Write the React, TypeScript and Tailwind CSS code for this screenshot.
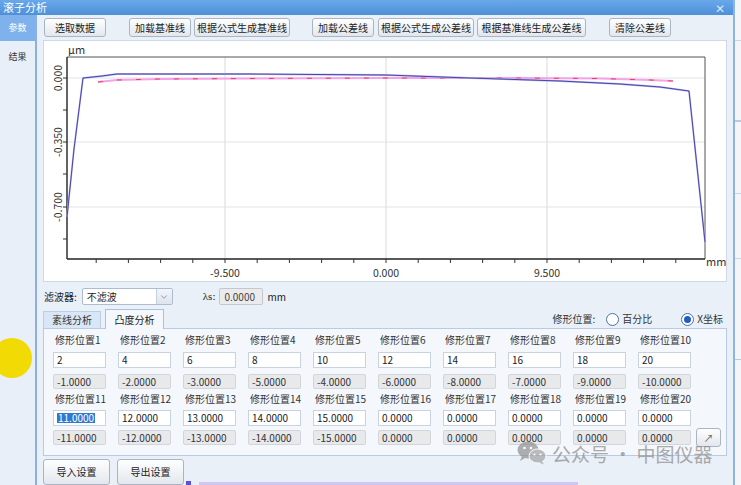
import React from "react";
import { ChevronDown } from "lucide-react";

const row1In = ["2", "4", "6", "8", "10", "12", "14", "16", "18", "20"];
const row1Out = ["-1.0000", "-2.0000", "-3.0000", "-5.0000", "-4.0000", "-6.0000", "-8.0000", "-7.0000", "-9.0000", "-10.0000"];
const row2In = ["11.0000", "12.0000", "13.0000", "14.0000", "15.0000", "0.0000", "0.0000", "0.0000", "0.0000", "0.0000"];
const row2Out = ["-11.0000", "-12.0000", "-13.0000", "-14.0000", "-15.0000", "0.0000", "0.0000", "0.0000", "0.0000", "0.0000"];

function Btn({ className, children }: { className: string; children: React.ReactNode }) {
  return (
    <button
      className={`flex items-center justify-center rounded-[3px] border border-[#aab4c2] bg-gradient-to-b from-[#fefefe] to-[#e3e7ed] text-[10px] leading-none text-[#222] ${className}`}
    >
      {children}
    </button>
  );
}

function Chart() {
  const xTicks: number[] = [];
  for (let k = -4; k <= 14; k++) xTicks.push(225 + k * 32.2);
  const yTicks = [79, 111, 143, 175, 208, 240];
  const blue = "67,218 74,150 83,79 102,77 117,75 250,75 386,76 470,79 560,82 620,85 660,88 689,92 705,243";
  const pink = "98,83 117,81 160,80 250,79.5 386,79 520,79 600,79.5 650,81 673,82";
  return (
    <svg width="682" height="240" viewBox="44 42 682 240" className="block">
      {/* grid */}
      {[225, 386, 547].map((x) => (
        <line key={x} x1={x} y1={58} x2={x} y2={260} stroke="#d9d9d9" strokeWidth="1" />
      ))}
      {[79, 143, 208].map((y) => (
        <line key={y} x1={67} y1={y} x2={705} y2={y} stroke="#e2e2e2" strokeWidth="1" />
      ))}
      {/* frame */}
      <line x1={67} y1={58} x2={705} y2={58} stroke="#555" strokeWidth="1" />
      <line x1={705} y1={58} x2={705} y2={260} stroke="#555" strokeWidth="1" />
      <line x1={67} y1={58} x2={67} y2={260} stroke="#222" strokeWidth="1.4" />
      <line x1={67} y1={260} x2={705} y2={260} stroke="#222" strokeWidth="1.4" />
      {xTicks.map((x) => (
        <line key={x} x1={x} y1={260} x2={x} y2={264} stroke="#333" strokeWidth="1" />
      ))}
      {yTicks.map((y) => (
        <line key={y} x1={63} y1={y} x2={67} y2={y} stroke="#333" strokeWidth="1" />
      ))}
      {/* curves */}
      <polyline points={pink} fill="none" stroke="#f4a3ea" strokeWidth="2" />
      <polyline points={pink} fill="none" stroke="#e8405e" strokeWidth="1" strokeDasharray="5 14" />
      <polyline points={blue} fill="none" stroke="#b9b6f5" strokeWidth="1.8" />
      <polyline points={blue} fill="none" stroke="#2b2a8e" strokeWidth="0.8" />
      {/* labels */}
      <g fill="#333" fontSize="10.5" fontFamily="'Noto Sans CJK SC','Liberation Sans',sans-serif">
        <text x={68} y={55} fontSize="11">μm</text>
        <text x={706} y={267} fontSize="11">mm</text>
        <text x={225} y={278} textAnchor="middle">-9.500</text>
        <text x={386} y={278} textAnchor="middle">0.000</text>
        <text x={547} y={278} textAnchor="middle">9.500</text>
        <text x={62} y={79} textAnchor="middle" transform="rotate(-90 62 79)">0.000</text>
        <text x={62} y={143} textAnchor="middle" transform="rotate(-90 62 143)">-0.350</text>
        <text x={62} y={208} textAnchor="middle" transform="rotate(-90 62 208)">-0.700</text>
      </g>
    </svg>
  );
}

function InBox({ v, sel }: { v: string; sel?: boolean }) {
  return (
    <div className="flex h-[16px] w-[53px] items-center border border-[#c9d3df] bg-white pl-[3px] text-[10px] leading-none text-[#222]">
      {sel ? <span className="bg-[#2f78d4] px-[1px] text-white">{v}</span> : v}
    </div>
  );
}

function OutBox({ v }: { v: string }) {
  return (
    <div className="flex h-[15px] w-[53px] items-center rounded-[2px] border border-[#d2d6db] bg-[#e8e9eb] pl-[3px] text-[10px] leading-none text-[#333]">
      {v}
    </div>
  );
}

function Radio({ on, label }: { on?: boolean; label: string }) {
  return (
    <div className="flex items-center gap-[3px]">
      <div className="flex h-[13px] w-[13px] items-center justify-center rounded-full border border-[#4d6fa3] bg-white">
        {on && <div className="h-[7px] w-[7px] rounded-full bg-[#1e5fc4]" />}
      </div>
      <span className="text-[10px] leading-none text-[#333]">{label}</span>
    </div>
  );
}

function WeChat() {
  return (
    <svg width="30" height="24" viewBox="0 0 30 24">
      <ellipse cx="11" cy="9" rx="10.5" ry="8.5" fill="#8f8f8f" />
      <path d="M5 15 L3 20 L9 16.5 Z" fill="#8f8f8f" />
      <ellipse cx="20.5" cy="15" rx="8.5" ry="7" fill="#a3a3a3" stroke="#fff" strokeWidth="1" />
      <path d="M25 20 L27 23.5 L22 21.5 Z" fill="#a3a3a3" />
      <circle cx="7.5" cy="7" r="1.3" fill="#fff" />
      <circle cx="14" cy="7" r="1.3" fill="#fff" />
      <circle cx="17.5" cy="13.5" r="1.1" fill="#fff" />
      <circle cx="23.5" cy="13.5" r="1.1" fill="#fff" />
    </svg>
  );
}

export default function App() {
  return (
    <div className="relative flex h-[485px] w-[741px] overflow-hidden bg-[#eef2f7] font-['Noto_Sans_CJK_SC','Liberation_Sans',sans-serif]">
      {/* window */}
      <div className="flex w-[735px] flex-col border-r-2 border-[#8fb4e2]">
        <div className="flex h-[16px] items-center justify-between bg-gradient-to-b from-[#69a8ea] to-[#4e8fd8] pl-[3px] pr-[8px]">
          <span className="text-[11px] leading-none text-white">滚子分析</span>
          <span className="text-[12px] leading-none text-[#d7e6f8]">✕</span>
        </div>
        <div className="flex flex-1">
          {/* sidebar */}
          <div className="flex w-[37px] flex-col border-r-2 border-[#8cb1e0] bg-[#e9eff8]">
            <div className="flex h-[26px] items-center justify-center bg-[#7fb2ec] text-[9px] text-white">参数</div>
            <div className="mt-[9px] text-center text-[9px] text-[#333]">结果</div>
          </div>
          {/* content */}
          <div className="flex flex-1 flex-col bg-[#eaf0f8] px-[6px]">
            <div className="mt-[3px] flex">
              <Btn className="ml-[1px] h-[19px] w-[62px]">选取数据</Btn>
              <Btn className="ml-[23px] h-[19px] w-[62px]">加载基准线</Btn>
              <Btn className="ml-[3px] h-[19px] w-[96px]">根据公式生成基准线</Btn>
              <Btn className="ml-[22px] h-[19px] w-[62px]">加载公差线</Btn>
              <Btn className="ml-[4px] h-[19px] w-[96px]">根据公式生成公差线</Btn>
              <Btn className="ml-[3px] h-[19px] w-[109px]">根据基准线生成公差线</Btn>
              <Btn className="ml-[23px] h-[19px] w-[62px]">清除公差线</Btn>
            </div>
            <div className="mt-[3px] h-[242px] w-[684px] border border-[#cdd9ea] bg-white">
              <Chart />
            </div>
            {/* filter row */}
            <div className="mt-[6px] flex h-[17px] items-center text-[10px] text-[#222]">
              <span className="ml-[1px]">滤波器:</span>
              <div className="ml-[5px] flex h-[17px] w-[91px] items-center justify-between rounded-[2px] border border-[#aebccf] bg-white pl-[4px]">
                <span className="leading-none">不滤波</span>
                <div className="flex h-full w-[16px] items-center justify-center border-l border-[#c5d0de] bg-gradient-to-b from-[#f3f6fa] to-[#dde4ee]">
                  <ChevronDown size={10} className="text-[#7d8a9c]" />
                </div>
              </div>
              <span className="ml-[30px] font-['Liberation_Serif',serif] text-[11px]">λs:</span>
              <div className="ml-[4px] flex h-[17px] w-[44px] items-center rounded-[2px] border border-[#c4c8ce] bg-[#ebebeb] pl-[4px] leading-none text-[#444]">
                0.0000
              </div>
              <span className="ml-[4px]">mm</span>
            </div>
            {/* tabs + radio */}
            <div className="mt-[5px] flex h-[18px] items-end">
              <div className="flex h-[17px] w-[58px] items-center justify-center border border-b-0 border-[#bccde4] bg-[#d9e6f6] text-[10px] leading-none text-[#333]">
                素线分析
              </div>
              <div className="relative z-10 -mb-[1px] ml-[4px] flex h-[20px] w-[59px] items-center justify-center border border-b-0 border-[#a9c0df] bg-[#f4f7fc] text-[10px] leading-none text-[#222]">
                凸度分析
              </div>
              <div className="ml-auto mr-[4px] flex h-[18px] items-center self-start">
                <span className="mr-[11px] text-[10px] leading-none text-[#333]">修形位置:</span>
                <Radio label="百分比" />
                <div className="ml-[29px]">
                  <Radio on label="X坐标" />
                </div>
              </div>
            </div>
            {/* panel */}
            <div className="h-[128px] w-[684px] border border-[#b9cbe4] bg-[#f4f7fc] pl-[9px] pt-[4px]">
              <div className="flex">
                {row1In.map((_, i) => (
                  <div key={i} className="w-[65px] pl-[2px] text-[10px] leading-[14px] text-[#333]">修形位置{i + 1}</div>
                ))}
              </div>
              <div className="mt-[5px] flex">
                {row1In.map((v, i) => (
                  <div key={i} className="w-[65px]"><InBox v={v} /></div>
                ))}
              </div>
              <div className="mt-[6px] flex">
                {row1Out.map((v, i) => (
                  <div key={i} className="w-[65px]"><OutBox v={v} /></div>
                ))}
              </div>
              <div className="mt-[3px] flex">
                {row1In.map((_, i) => (
                  <div key={i} className="w-[65px] pl-[2px] text-[10px] leading-[14px] text-[#333]">修形位置{i + 11}</div>
                ))}
              </div>
              <div className="mt-[4px] flex">
                {row2In.map((v, i) => (
                  <div key={i} className="w-[65px]"><InBox v={v} sel={i === 0} /></div>
                ))}
              </div>
              <div className="mt-[4px] flex items-start">
                {row2Out.map((v, i) => (
                  <div key={i} className="w-[65px]"><OutBox v={v} /></div>
                ))}
                <Btn className="-ml-[7px] -mt-[2px] h-[19px] w-[25px] text-[#666]">↗</Btn>
              </div>
            </div>
            {/* bottom */}
            <div className="mt-[3px] flex">
              <Btn className="h-[26px] w-[67px]">导入设置</Btn>
              <Btn className="ml-[7px] h-[26px] w-[67px]">导出设置</Btn>
            </div>
          </div>
        </div>
      </div>
      {/* neighbour window strip */}
      <div className="flex flex-1 flex-col bg-[#f3f5f8]">
        <div className="mt-[40px] h-[1px] bg-[#c9d6e6]" />
        <div className="mt-[79px] h-[2px] bg-[#b8c9e2]" />
        <div className="mt-[71px] h-[1px] bg-[#c9d6e6]" />
        <div className="mt-[64px] h-[1px] bg-[#c9d6e6]" />
        <div className="mt-[100px] h-[1px] bg-[#b8c9e2]" />
      </div>
      {/* taskbar sliver */}
      <div className="absolute bottom-0 left-[186px] flex h-[4px] w-[392px] items-center">
        <div className="h-[4px] w-[5px] bg-[#5a4fd6]" />
        <div className="ml-[8px] h-[3px] flex-1 bg-[#cfc6f4]" />
      </div>
      {/* cursor highlight */}
      <div className="absolute left-[-8px] top-[338px] h-[40px] w-[40px] rounded-full bg-[#f2da05]" />
      {/* watermark */}
      <div className="pointer-events-none absolute left-[517px] top-[441px] flex items-center gap-[5px] opacity-70">
        <WeChat />
        <span className="text-[19px] leading-none text-[#8a8a8a]">公众号 · 中图仪器</span>
      </div>
    </div>
  );
}
